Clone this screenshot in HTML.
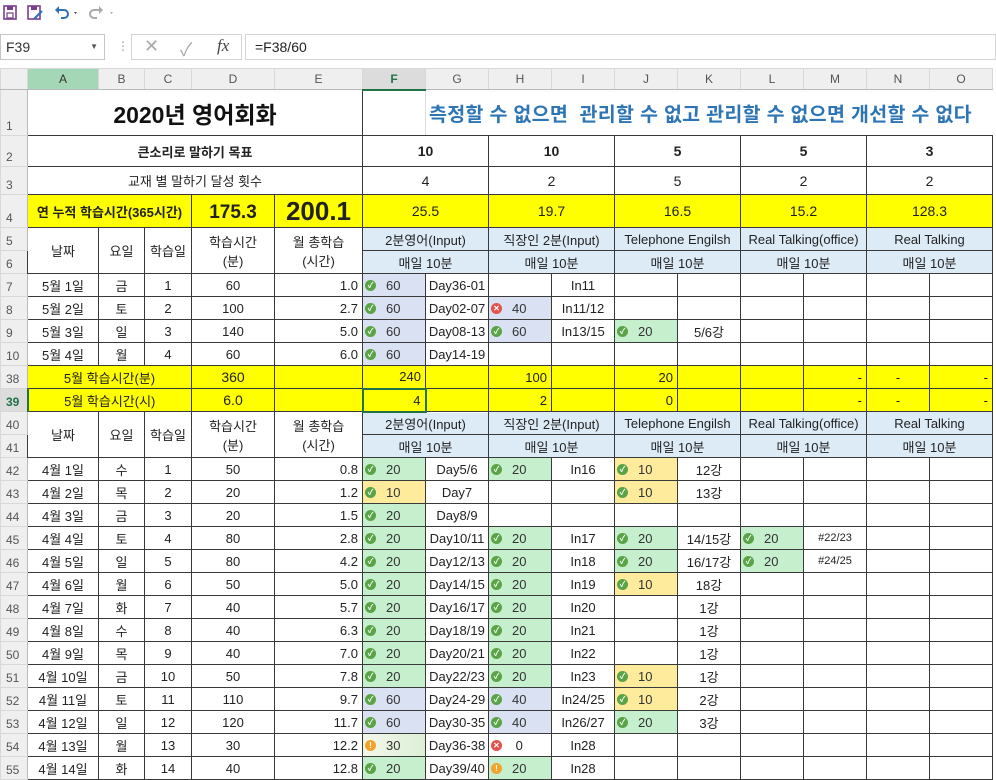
<!DOCTYPE html>
<html><head><meta charset="utf-8">
<style>
*{box-sizing:border-box;margin:0;padding:0}
body{width:996px;height:780px;overflow:hidden;background:#fff;font-family:"Liberation Sans","Noto Sans CJK KR",sans-serif;color:#222;position:relative}
.tb{position:absolute;top:0;left:0;height:30px;width:996px}
.fb{position:absolute;top:34px;left:0;height:27px;width:996px}
.nb{position:absolute;left:0;top:0;width:105px;height:26px;border:1px solid #c6c6c6;font-size:14px;line-height:24px;padding-left:5px;color:#333}
.nb span{position:absolute;right:6px;top:0;font-size:8px;color:#555}
.fx{position:absolute;left:131px;top:0;width:111px;height:26px;border:1px solid #d4d4d4;color:#aaa;font-size:18px}
.fi{position:absolute;left:245px;top:0;width:751px;height:26px;border:1px solid #d4d4d4;font-size:14px;line-height:24px;padding-left:9px;color:#222}
table{position:absolute;top:68px;left:0;border-collapse:collapse;table-layout:fixed;font-size:13px}
td{border:1px solid #3a3a3a;text-align:center;vertical-align:middle;white-space:nowrap;overflow:hidden;padding:0}
tr.h td{background:#efefef;border:1px solid #d8d8d8;border-bottom:1px solid #b9b9b9;color:#555;font-size:12px}
td.rh{background:#efefef;border:1px solid #d8d8d8;border-right:1px solid #b9b9b9;color:#555;font-size:12px;text-align:left;padding-left:5px;vertical-align:bottom;padding-bottom:2px}
.r{text-align:right;padding-right:4px}
.ye{background:#ffff00}
.lb{background:#ddebf7}
.g{background:#c6efce;text-align:left;padding-left:2px}
.y{background:#ffeb9c;text-align:left;padding-left:2px}
.b{background:#d9e1f2;text-align:left;padding-left:2px}
.w{text-align:left;padding-left:2px}
.lg{background:linear-gradient(90deg,#f3f7ea,#dcefd6);text-align:left;padding-left:2px}
i{display:inline-block;width:11px;height:11px;border-radius:50%;vertical-align:2px;margin-right:10px;position:relative;font-style:normal;color:#fff;font-size:8px;line-height:11px;text-align:center;font-weight:bold}
i.o{background:#5aa346}
i.x{background:#e2534b}
i.e{background:#f2a32c}
.g,.y,.b,.lg{color:#333}
</style></head><body>
<div class="tb">
<svg width="130" height="30" viewBox="0 0 130 30">
<rect x="4" y="6" width="12" height="13" fill="none" stroke="#7a3d8c" stroke-width="1.6"/><rect x="7" y="6" width="6" height="4" fill="#7a3d8c"/><rect x="7" y="13" width="6" height="5" fill="none" stroke="#7a3d8c" stroke-width="1.2"/>
<rect x="28" y="6" width="12" height="13" fill="none" stroke="#7a3d8c" stroke-width="1.6"/><rect x="31" y="6" width="6" height="4" fill="#7a3d8c"/><path d="M34 19 L42 11" stroke="#2e6fb5" stroke-width="2"/>
<path d="M58 10 h6 a4 4 0 0 1 0 8 h-3" fill="none" stroke="#2e6fb5" stroke-width="2"/><path d="M55 10 l4 -4 v8z" fill="#2e6fb5"/><path d="M74 12 l3 0 l-1.5 2z" fill="#444"/>
<path d="M100 10 h-6 a4 4 0 0 0 0 8 h3" fill="none" stroke="#aaa" stroke-width="2"/><path d="M103 10 l-4 -4 v8z" fill="#aaa"/><path d="M110 12 l3 0 l-1.5 2z" fill="#aaa"/>
<path d="M130 12 h3" stroke="#888"/>
</svg>
</div>
<div class="fb">
<div class="nb">F39<span>▼</span></div>
<div style="position:absolute;left:117px;top:5px;color:#999;font-size:12px">⋮</div>
<div class="fx"><span style="position:absolute;left:12px;top:1px">✕</span><span style="position:absolute;left:48px;top:1px">✓</span><span style="position:absolute;left:85px;top:1px;color:#444;font-family:'Liberation Serif',serif;font-style:italic;font-size:17px">fx</span></div>
<div class="fi">=F38/60</div>
</div>
<table>
<colgroup><col style="width:27px"><col style="width:71px"><col style="width:46px"><col style="width:47px"><col style="width:83px"><col style="width:88px"><col style="width:63px"><col style="width:63px"><col style="width:63px"><col style="width:63px"><col style="width:63px"><col style="width:63px"><col style="width:63px"><col style="width:63px"><col style="width:63px"><col style="width:63px"></colgroup>
<tr class="h" style="height:21px"><td style="border-right:1px solid #d8d8d8"></td><td style="background:#a3d7b5;color:#333">A</td><td>B</td><td>C</td><td>D</td><td>E</td><td style="background:#dcdcdc;color:#217346;font-weight:bold;border-bottom:2px solid #217346">F</td><td>G</td><td>H</td><td>I</td><td>J</td><td>K</td><td>L</td><td>M</td><td>N</td><td>O</td></tr>
<tr style="height:46px"><td class="rh">1</td><td colspan="5" style="font-size:23px;font-weight:bold;color:#111;border-top:none;border-left:none">2020년 영어회화</td><td style="border-top:none;border-right:1px solid #ddd"></td><td colspan="9" style="font-size:19.5px;font-weight:bold;color:#2e75b6;border-top:none;border-left:none;border-right:none;text-align:left;padding-left:3px;letter-spacing:0.3px">측정할 수 없으면&nbsp; 관리할 수 없고 관리할 수 없으면 개선할 수 없다</td></tr>
<tr style="height:31px"><td class="rh">2</td><td colspan="5" style="font-weight:bold">큰소리로 말하기 목표</td><td colspan="2" style="font-weight:bold;font-size:14px">10</td><td colspan="2" style="font-weight:bold;font-size:14px">10</td><td colspan="2" style="font-weight:bold;font-size:14px">5</td><td colspan="2" style="font-weight:bold;font-size:14px">5</td><td colspan="2" style="font-weight:bold;font-size:14px">3</td></tr>
<tr style="height:28px"><td class="rh">3</td><td colspan="5">교재 별 말하기 달성 횟수</td><td colspan="2" style="font-size:14px">4</td><td colspan="2" style="font-size:14px">2</td><td colspan="2" style="font-size:14px">5</td><td colspan="2" style="font-size:14px">2</td><td colspan="2" style="font-size:14px">2</td></tr>
<tr style="height:33px" class="ye"><td class="rh">4</td><td colspan="3" class="ye" style="font-weight:bold">연 누적 학습시간(365시간)</td><td class="ye" style="font-weight:bold;font-size:19px;padding-top:4px">175.3</td><td class="ye" style="font-weight:bold;font-size:26px">200.1</td><td colspan="2" class="ye" style="font-size:14px">25.5</td><td colspan="2" class="ye" style="font-size:14px">19.7</td><td colspan="2" class="ye" style="font-size:14px">16.5</td><td colspan="2" class="ye" style="font-size:14px">15.2</td><td colspan="2" class="ye" style="font-size:14px">128.3</td></tr>
<tr style="height:23px"><td class="rh">5</td><td rowspan="2">날짜</td><td rowspan="2">요일</td><td rowspan="2">학습일</td><td rowspan="2">학습시간<br>(분)</td><td rowspan="2">월 총학습<br>(시간)</td><td colspan="2" class="lb">2분영어(Input)</td><td colspan="2" class="lb">직장인 2분(Input)</td><td colspan="2" class="lb">Telephone Engilsh</td><td colspan="2" class="lb">Real Talking(office)</td><td colspan="2" class="lb">Real Talking</td></tr>
<tr style="height:23px"><td class="rh">6</td><td colspan="2" class="lb">매일 10분</td><td colspan="2" class="lb">매일 10분</td><td colspan="2" class="lb">매일 10분</td><td colspan="2" class="lb">매일 10분</td><td colspan="2" class="lb">매일 10분</td></tr>
<tr style="height:23px"><td class="rh">7</td><td>5월 1일</td><td>금</td><td>1</td><td>60</td><td class="r">1.0</td><td class="b"><i class="o">✓</i>60</td><td>Day36-01</td><td></td><td>In11</td><td></td><td></td><td></td><td></td><td></td><td></td></tr>
<tr style="height:23px"><td class="rh">8</td><td>5월 2일</td><td>토</td><td>2</td><td>100</td><td class="r">2.7</td><td class="b"><i class="o">✓</i>60</td><td>Day02-07</td><td class="b"><i class="x">✕</i>40</td><td>In11/12</td><td></td><td></td><td></td><td></td><td></td><td></td></tr>
<tr style="height:23px"><td class="rh">9</td><td>5월 3일</td><td>일</td><td>3</td><td>140</td><td class="r">5.0</td><td class="b"><i class="o">✓</i>60</td><td>Day08-13</td><td class="b"><i class="o">✓</i>60</td><td>In13/15</td><td class="g"><i class="o">✓</i>20</td><td>5/6강</td><td></td><td></td><td></td><td></td></tr>
<tr style="height:23px"><td class="rh">10</td><td>5월 4일</td><td>월</td><td>4</td><td>60</td><td class="r">6.0</td><td class="b"><i class="o">✓</i>60</td><td>Day14-19</td><td></td><td></td><td></td><td></td><td></td><td></td><td></td><td></td></tr>
<tr style="height:23px" class="ye"><td class="rh">38</td><td colspan="3" class="ye">5월 학습시간(분)</td><td class="ye" style="font-size:14px">360</td><td class="ye"></td><td class="ye r">240</td><td class="ye"></td><td class="ye r">100</td><td class="ye"></td><td class="ye r">20</td><td class="ye"></td><td class="ye"></td><td class="ye r">-</td><td class="ye">-</td><td class="ye r">-</td></tr>
<tr style="height:23px" class="ye"><td class="rh" style="background:#dcdcdc;color:#217346;font-weight:bold;border-right:2px solid #217346">39</td><td colspan="3" class="ye">5월 학습시간(시)</td><td class="ye" style="font-size:14px">6.0</td><td class="ye"></td><td class="ye r" style="border:2px solid #217346">4</td><td class="ye"></td><td class="ye r">2</td><td class="ye"></td><td class="ye r">0</td><td class="ye"></td><td class="ye"></td><td class="ye r">-</td><td class="ye">-</td><td class="ye r">-</td></tr>
<tr style="height:23px"><td class="rh">40</td><td rowspan="2">날짜</td><td rowspan="2">요일</td><td rowspan="2">학습일</td><td rowspan="2">학습시간<br>(분)</td><td rowspan="2">월 총학습<br>(시간)</td><td colspan="2" class="lb">2분영어(Input)</td><td colspan="2" class="lb">직장인 2분(Input)</td><td colspan="2" class="lb">Telephone Engilsh</td><td colspan="2" class="lb">Real Talking(office)</td><td colspan="2" class="lb">Real Talking</td></tr>
<tr style="height:23px"><td class="rh">41</td><td colspan="2" class="lb">매일 10분</td><td colspan="2" class="lb">매일 10분</td><td colspan="2" class="lb">매일 10분</td><td colspan="2" class="lb">매일 10분</td><td colspan="2" class="lb">매일 10분</td></tr>
<tr style="height:23px"><td class="rh">42</td><td>4월 1일</td><td>수</td><td>1</td><td>50</td><td class="r">0.8</td><td class="g"><i class="o">✓</i>20</td><td>Day5/6</td><td class="g"><i class="o">✓</i>20</td><td>In16</td><td class="y"><i class="o">✓</i>10</td><td>12강</td><td></td><td></td><td></td><td></td></tr>
<tr style="height:23px"><td class="rh">43</td><td>4월 2일</td><td>목</td><td>2</td><td>20</td><td class="r">1.2</td><td class="y"><i class="o">✓</i>10</td><td>Day7</td><td></td><td></td><td class="y"><i class="o">✓</i>10</td><td>13강</td><td></td><td></td><td></td><td></td></tr>
<tr style="height:23px"><td class="rh">44</td><td>4월 3일</td><td>금</td><td>3</td><td>20</td><td class="r">1.5</td><td class="g"><i class="o">✓</i>20</td><td>Day8/9</td><td></td><td></td><td></td><td></td><td></td><td></td><td></td><td></td></tr>
<tr style="height:23px"><td class="rh">45</td><td>4월 4일</td><td>토</td><td>4</td><td>80</td><td class="r">2.8</td><td class="g"><i class="o">✓</i>20</td><td>Day10/11</td><td class="g"><i class="o">✓</i>20</td><td>In17</td><td class="g"><i class="o">✓</i>20</td><td>14/15강</td><td class="g"><i class="o">✓</i>20</td><td style="font-size:11px">#22/23</td><td></td><td></td></tr>
<tr style="height:23px"><td class="rh">46</td><td>4월 5일</td><td>일</td><td>5</td><td>80</td><td class="r">4.2</td><td class="g"><i class="o">✓</i>20</td><td>Day12/13</td><td class="g"><i class="o">✓</i>20</td><td>In18</td><td class="g"><i class="o">✓</i>20</td><td>16/17강</td><td class="g"><i class="o">✓</i>20</td><td style="font-size:11px">#24/25</td><td></td><td></td></tr>
<tr style="height:23px"><td class="rh">47</td><td>4월 6일</td><td>월</td><td>6</td><td>50</td><td class="r">5.0</td><td class="g"><i class="o">✓</i>20</td><td>Day14/15</td><td class="g"><i class="o">✓</i>20</td><td>In19</td><td class="y"><i class="o">✓</i>10</td><td>18강</td><td></td><td></td><td></td><td></td></tr>
<tr style="height:23px"><td class="rh">48</td><td>4월 7일</td><td>화</td><td>7</td><td>40</td><td class="r">5.7</td><td class="g"><i class="o">✓</i>20</td><td>Day16/17</td><td class="g"><i class="o">✓</i>20</td><td>In20</td><td></td><td>1강</td><td></td><td></td><td></td><td></td></tr>
<tr style="height:23px"><td class="rh">49</td><td>4월 8일</td><td>수</td><td>8</td><td>40</td><td class="r">6.3</td><td class="g"><i class="o">✓</i>20</td><td>Day18/19</td><td class="g"><i class="o">✓</i>20</td><td>In21</td><td></td><td>1강</td><td></td><td></td><td></td><td></td></tr>
<tr style="height:23px"><td class="rh">50</td><td>4월 9일</td><td>목</td><td>9</td><td>40</td><td class="r">7.0</td><td class="g"><i class="o">✓</i>20</td><td>Day20/21</td><td class="g"><i class="o">✓</i>20</td><td>In22</td><td></td><td>1강</td><td></td><td></td><td></td><td></td></tr>
<tr style="height:23px"><td class="rh">51</td><td>4월 10일</td><td>금</td><td>10</td><td>50</td><td class="r">7.8</td><td class="g"><i class="o">✓</i>20</td><td>Day22/23</td><td class="g"><i class="o">✓</i>20</td><td>In23</td><td class="y"><i class="o">✓</i>10</td><td>1강</td><td></td><td></td><td></td><td></td></tr>
<tr style="height:23px"><td class="rh">52</td><td>4월 11일</td><td>토</td><td>11</td><td>110</td><td class="r">9.7</td><td class="b"><i class="o">✓</i>60</td><td>Day24-29</td><td class="b"><i class="o">✓</i>40</td><td>In24/25</td><td class="y"><i class="o">✓</i>10</td><td>2강</td><td></td><td></td><td></td><td></td></tr>
<tr style="height:23px"><td class="rh">53</td><td>4월 12일</td><td>일</td><td>12</td><td>120</td><td class="r">11.7</td><td class="b"><i class="o">✓</i>60</td><td>Day30-35</td><td class="b"><i class="o">✓</i>40</td><td>In26/27</td><td class="g"><i class="o">✓</i>20</td><td>3강</td><td></td><td></td><td></td><td></td></tr>
<tr style="height:23px"><td class="rh">54</td><td>4월 13일</td><td>월</td><td>13</td><td>30</td><td class="r">12.2</td><td class="lg"><i class="e">!</i>30</td><td>Day36-38</td><td class="w"><i class="x">✕</i>&nbsp;0</td><td>In28</td><td></td><td></td><td></td><td></td><td></td><td></td></tr>
<tr style="height:23px"><td class="rh">55</td><td>4월 14일</td><td>화</td><td>14</td><td>40</td><td class="r">12.8</td><td class="g"><i class="o">✓</i>20</td><td>Day39/40</td><td class="g"><i class="e">!</i>20</td><td>In28</td><td></td><td></td><td></td><td></td><td></td><td></td></tr>
</table>
</body></html>
